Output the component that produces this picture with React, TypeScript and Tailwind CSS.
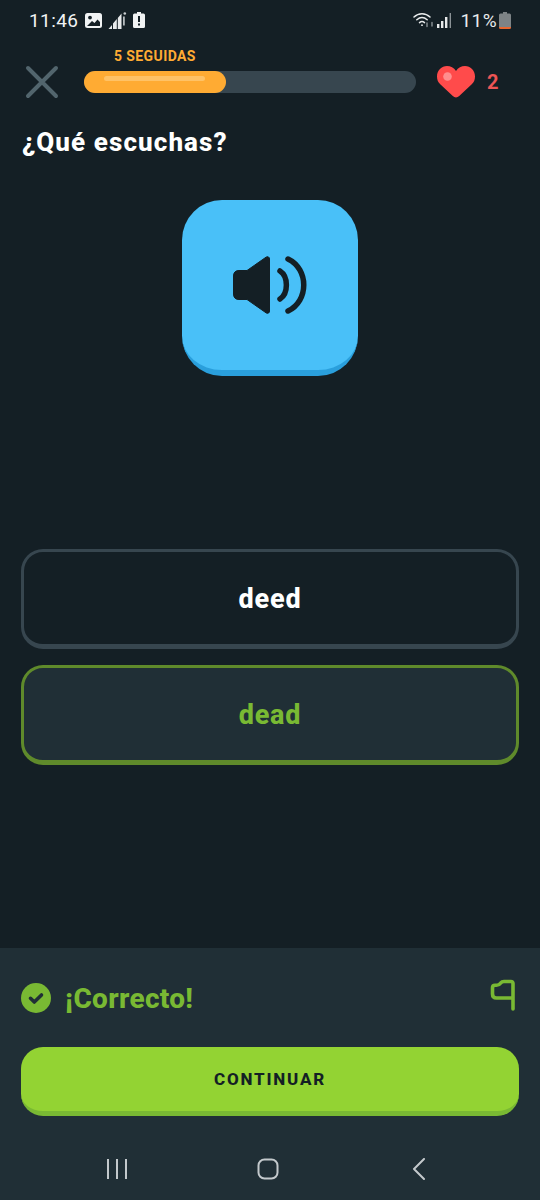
const ImageIcon = () => (
  <svg width="17" height="15" viewBox="0 0 17 15">
    <rect x="0" y="0" width="17" height="15" rx="2.5" fill="#f1f3f4" />
    <circle cx="5" cy="4.6" r="1.9" fill="#141f25" />
    <path d="M2 13 L7 8 L9.5 10 L12.5 6.5 L15 9 V13 Z" fill="#141f25" />
  </svg>
);

const SignalData = () => (
  <svg width="19" height="19" viewBox="0 0 19 19">
    <path d="M0.5 18 L4 14 V18 Z M5 18 V12.5 L8.8 8 V18 Z M9.8 18 V7 L13.5 2.5 V18 Z" fill="#e8eaeb" />
    <circle cx="16.8" cy="2.5" r="1.3" fill="#c9cdcf" />
    <rect x="15" y="5.5" width="1.8" height="9" fill="#b4b9bc" />
  </svg>
);

const BatteryAlert = () => (
  <svg width="12" height="16" viewBox="0 0 12 16">
    <path d="M4 0 H8 V1.5 H10.5 A1.5 1.5 0 0 1 12 3 V14.5 A1.5 1.5 0 0 1 10.5 16 H1.5 A1.5 1.5 0 0 1 0 14.5 V3 A1.5 1.5 0 0 1 1.5 1.5 H4 Z" fill="#f1f3f4" />
    <rect x="5" y="4" width="2" height="6" fill="#141f25" />
    <rect x="5" y="11.5" width="2" height="2" fill="#141f25" />
  </svg>
);

const WifiIcon = () => (
  <svg width="21" height="17" viewBox="0 0 21 17" fill="none" stroke="#e8eaeb" strokeWidth="1.5" strokeLinecap="round">
    <path d="M1 5 C5.5 0.5 12.5 0.5 17 5" />
    <path d="M3.8 7.8 C7 5 11 5 14.2 7.8" />
    <path d="M6.5 10.6 C8.2 9.2 9.8 9.2 11.5 10.6" />
    <circle cx="9" cy="13.2" r="0.9" fill="#e8eaeb" stroke="none" />
    <path d="M14 14.5 V11 M19 14 V10.5" stroke="#8b9296" strokeWidth="1.4" />
  </svg>
);

const SignalBars = () => (
  <svg width="15" height="15" viewBox="0 0 15 15">
    <rect x="0" y="11" width="2.4" height="4" fill="#e8eaeb" />
    <rect x="4" y="8" width="2.4" height="7" fill="#e8eaeb" />
    <rect x="8" y="4" width="2.4" height="11" fill="#e8eaeb" />
    <rect x="12.6" y="0" width="1.4" height="15" fill="#8b9296" />
  </svg>
);

const BatteryLow = () => (
  <svg width="12" height="17" viewBox="0 0 12 17">
    <path d="M4 0 H8 V1.5 H10.5 A1.5 1.5 0 0 1 12 3 V15 H0 V3 A1.5 1.5 0 0 1 1.5 1.5 H4 Z" fill="#7d8386" />
    <path d="M0 15 H12 V15.5 A1.5 1.5 0 0 1 10.5 17 H1.5 A1.5 1.5 0 0 1 0 15.5 Z" fill="#e8672f" />
  </svg>
);

const CloseIcon = () => (
  <svg width="34" height="34" viewBox="0 0 34 34" fill="none" stroke="#52656d" strokeWidth="4" strokeLinecap="round">
    <path d="M3 3 L31 31 M31 3 L3 31" />
  </svg>
);

const Heart = () => (
  <svg width="38" height="32" viewBox="0 0 38 32">
    <path d="M19 31.5 C17.8 31.5 16.8 31 15.8 30.1 L3.5 18.6 C1 16.2 0 13.6 0 10.4 C0 4.4 4.6 0 10 0 C13.6 0 16.9 1.8 19 5 C21.1 1.8 24.4 0 28 0 C33.4 0 38 4.4 38 10.4 C38 13.6 37 16.2 34.5 18.6 L22.2 30.1 C21.2 31 20.2 31.5 19 31.5 Z" fill="#ff4b4b" />
    <circle cx="10.5" cy="10.5" r="4.3" fill="#ff8f8f" />
  </svg>
);

const SpeakerIcon = () => (
  <svg width="74" height="58" viewBox="0 0 74 58" fill="none">
    <path d="M6 14.5 H14 L33 1.2 C34.8 0 36.5 1 36.5 3 V55 C36.5 57 34.8 58 33 56.8 L14 43.5 H6 C2.5 43.5 0.5 41.5 0.5 38 V20 C0.5 16.5 2.5 14.5 6 14.5 Z" fill="#141f25" stroke="#141f25" strokeWidth="1" strokeLinejoin="round" />
    <path d="M47 15 C55.5 20.5 55.5 37.5 47 43" stroke="#141f25" strokeWidth="5.5" strokeLinecap="round" />
    <path d="M55 3 C76 13 76 45 55 55" stroke="#141f25" strokeWidth="5.5" strokeLinecap="round" />
  </svg>
);

const CheckBadge = () => (
  <svg width="30" height="30" viewBox="0 0 30 30">
    <circle cx="15" cy="15" r="15" fill="#79b933" />
    <path d="M9.5 15.3 L13.3 19 L20.5 12" fill="none" stroke="#202f36" strokeWidth="3.6" strokeLinecap="round" strokeLinejoin="round" />
  </svg>
);

const FlagIcon = () => (
  <svg width="26" height="32" viewBox="0 0 26 32" fill="none" stroke="#79b933" strokeWidth="3.6" strokeLinecap="round" strokeLinejoin="round">
    <path d="M23 30 V4.5 C23 3.2 22.3 2.5 21 2.5 H14 C12.5 2.5 11.5 3 10.5 4.2 C9.5 5.6 8.5 6.2 6.5 6.2 H5 C3.3 6.2 2.5 7.2 2.5 8.8 V15 C2.5 17.5 4 19 6.5 19 H23" />
  </svg>
);

const App = () => {
  return (
    <div className="w-[540px] h-[1200px] flex flex-col overflow-hidden bg-[#141f25] font-['Roboto',sans-serif] text-white">
      {/* Status bar */}
      <div className="h-10 shrink-0 pl-[29px] pr-[29px] flex items-center justify-between">
        <div className="flex items-center">
          <span className="text-[19px] leading-none text-[#f1f3f4] tracking-[0.4px]">11:46</span>
          <div className="ml-[7px] flex items-center gap-[6px]">
            <ImageIcon />
            <SignalData />
            <BatteryAlert />
          </div>
        </div>
        <div className="flex items-center">
          <WifiIcon />
          <div className="ml-[3px]"><SignalBars /></div>
          <span className="ml-[9px] text-[19px] leading-none text-[#e8eaeb] tracking-[0.4px]">11%</span>
          <div className="ml-[2px]"><BatteryLow /></div>
        </div>
      </div>

      {/* Progress header */}
      <div className="h-[58px] shrink-0 pl-[25px] flex items-start">
        <div className="mt-[25px]"><CloseIcon /></div>
        <div className="ml-[25px] w-[332px] flex flex-col">
          <span className="ml-[30px] mt-[8px] h-4 text-[14px] leading-4 font-bold tracking-[0.4px] text-[#ffab33]">5 SEGUIDAS</span>
          <div className="mt-[7px] h-[22px] rounded-full bg-[#37464f]">
            <div className="w-[142px] h-[22px] rounded-full bg-[#ffab33] pt-[5px] pl-[20px] pr-[21px]">
              <div className="h-[5px] rounded-full bg-[#ffc266]" />
            </div>
          </div>
        </div>
        <div className="ml-[21px] mt-[26px]"><Heart /></div>
        <span className="ml-[12px] mt-[30px] text-[20px] leading-6 font-bold text-[#ee5555]">2</span>
      </div>

      {/* Question */}
      <h1 className="mt-[27px] ml-[22px] text-[26px] leading-[34px] font-extrabold tracking-[1.1px]">¿Qué escuchas?</h1>

      {/* Audio button */}
      <div className="mt-[41px] mx-auto w-[176px] h-[176px] shrink-0 rounded-[40px] bg-[#49c0f8] border-b-[6px] border-[#2a9fdc] flex items-center justify-center">
        <SpeakerIcon />
      </div>

      {/* Options */}
      <div className="mt-[173px] mx-[21px] flex flex-col gap-[16px]">
        <div className="h-[100px] pt-[2px] rounded-[22px] border-[3px] border-b-[5px] border-[#37464f] flex items-center justify-center text-[27px] font-extrabold tracking-[0.8px]">
          deed
        </div>
        <div className="h-[100px] pt-[2px] rounded-[22px] border-[3px] border-b-[5px] border-[#5f8a2b] bg-[#202f36] flex items-center justify-center text-[27px] font-extrabold tracking-[0.8px] text-[#79b933]">
          dead
        </div>
      </div>

      {/* Result footer */}
      <div className="mt-auto h-[252px] shrink-0 bg-[#202f36] flex flex-col">
        <div className="h-[99px] shrink-0 pl-[21px] pr-[24px] flex items-center justify-between">
          <div className="flex items-center">
            <CheckBadge />
            <span className="ml-[14px] mt-[3px] text-[28px] font-extrabold tracking-[0.3px] text-[#79b933]">¡Correcto!</span>
          </div>
          <div className="-mt-[6px]"><FlagIcon /></div>
        </div>
        <div className="mx-[21px] h-[69px] pt-[2px] shrink-0 rounded-[22px] bg-[#93d333] border-b-[5px] border-[#79b933] flex items-center justify-center text-[17px] font-extrabold tracking-[1.8px] text-[#141f25]">
          CONTINUAR
        </div>
        {/* Android nav */}
        <div className="flex-1 pt-[22px] flex items-center">
          <div className="w-[128px] flex justify-end">
            <svg width="22" height="20" viewBox="0 0 22 20" fill="none" stroke="#c3c9cc" strokeWidth="2">
              <path d="M2 0 V20 M11 0 V20 M20 0 V20" />
            </svg>
          </div>
          <div className="ml-[129px]">
            <svg width="22" height="22" viewBox="0 0 22 22" fill="none" stroke="#c3c9cc" strokeWidth="2">
              <rect x="1.5" y="1.5" width="19" height="19" rx="6" />
            </svg>
          </div>
          <div className="ml-[133px]">
            <svg width="14" height="22" viewBox="0 0 14 22" fill="none" stroke="#c3c9cc" strokeWidth="2" strokeLinecap="round" strokeLinejoin="round">
              <path d="M12 1 L2 11 L12 21" />
            </svg>
          </div>
        </div>
      </div>
    </div>
  );
};

export default App;
